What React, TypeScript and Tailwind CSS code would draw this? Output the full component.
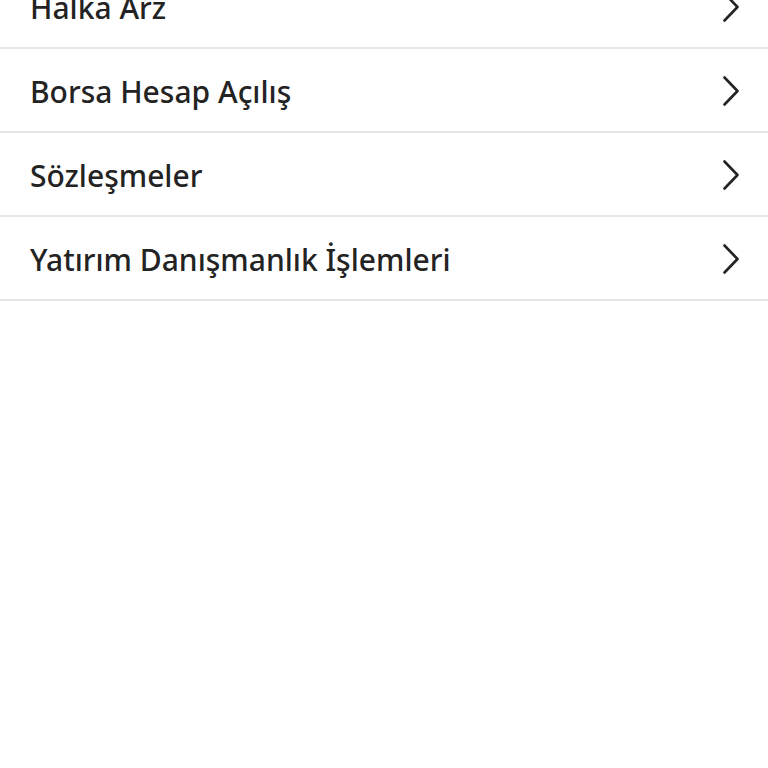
const items = [
    "Halka Arz",
    "Borsa Hesap Açılış",
    "Sözleşmeler",
    "Yatırım Danışmanlık İşlemleri",
];

const MenuRow = ({ label }: { label: string }) => (
    <div className="flex items-center justify-between h-[84px] pl-[30px] pr-[29px] pt-[2px] border-b-2 border-[#e6e6e6] cursor-pointer">
        <span className="text-[30px] font-medium text-[#232323]">
            {label}
        </span>
        <svg
            width="16"
            height="30"
            viewBox="0 0 16 30"
            fill="none"
            stroke="#232323"
            strokeWidth="2.6"
            strokeLinecap="round"
            strokeLinejoin="round"
        >
            <path d="M1.5 1.5 L14.5 15 L1.5 28.5" />
        </svg>
    </div>
);

export default function App() {
    return (
        <div className="w-[768px] h-[768px] bg-white overflow-hidden font-['Noto_Sans',sans-serif]">
            <div className="-mt-[35px]">
                {items.map((item) => (
                    <MenuRow key={item} label={item} />
                ))}
            </div>
        </div>
    );
}
